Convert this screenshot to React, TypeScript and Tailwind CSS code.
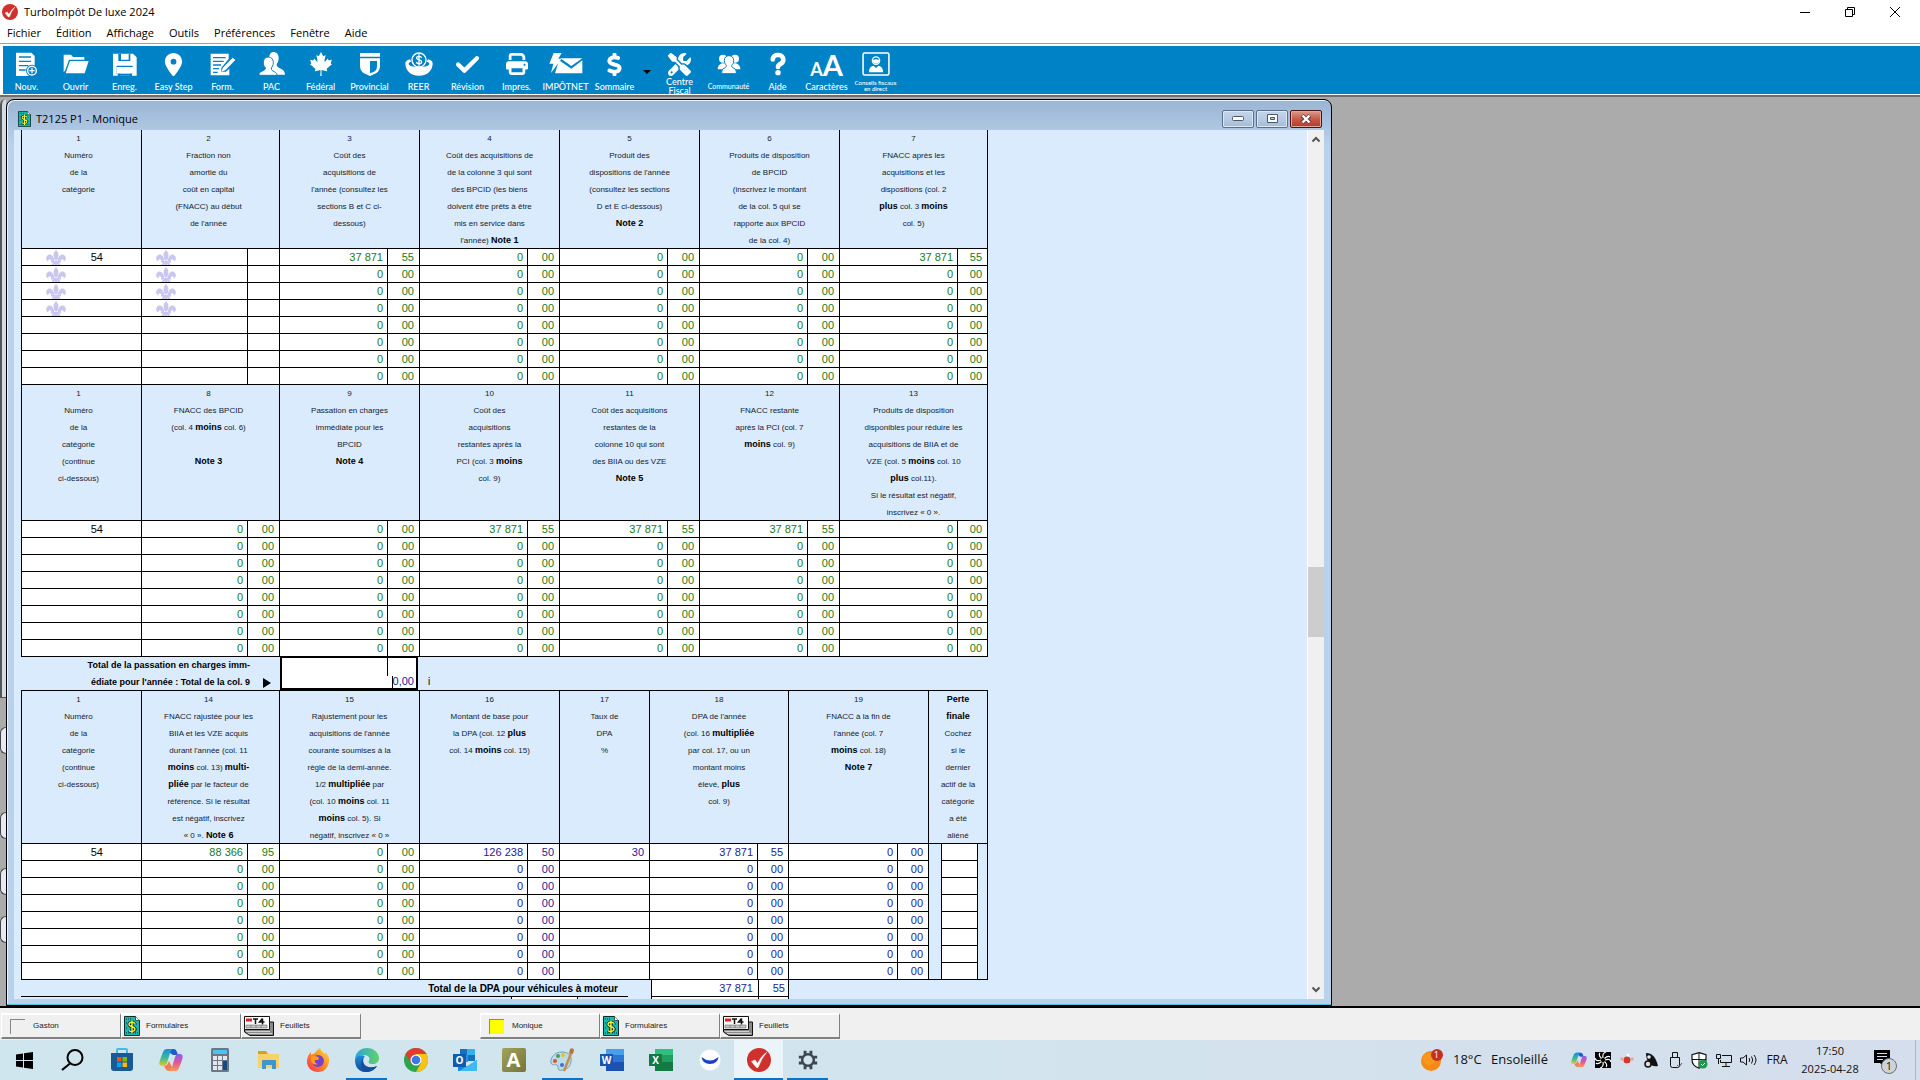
import type { ReactNode } from 'react'
import { FaCanadianMapleLeaf, FaCheck, FaDollarSign, FaLocationDot, FaPrint, FaQuestion, FaScrewdriverWrench } from 'react-icons/fa6'

/* ---------- Toolbar icons ---------- */

const NewIcon = () => (
  <svg width="22" height="24" viewBox="0 0 66 72" fill="#fff">
    <path d="M0 2h46l10 10v60H0z" />
    <path d="M9 15h36M9 28h36M9 41h28M9 54h20" stroke="#0082c6" strokeWidth="4" />
    <circle cx="48" cy="56" r="18" fill="#0082c6" />
    <circle cx="48" cy="56" r="13" fill="none" stroke="#fff" strokeWidth="4" />
    <path d="M48 48v16M40 56h16" stroke="#fff" strokeWidth="4" />
  </svg>
)

const OpenIcon = () => (
  <svg width="26" height="20" viewBox="0 0 78 60" fill="#fff">
    <path d="M2 2h22l6 7h34v8H18L6 50 2 54z" />
    <path d="M21 21h56L65 58H8z" />
  </svg>
)

const SaveIcon = () => (
  <svg width="24" height="23" viewBox="0 0 72 69">
    <path fill="#fff" d="M0 2h60l11 11v55H0z" />
    <path fill="#0082c6" d="M16 2h8v18h23V2h5v22H16zM10 42q0-4 4-4h42q4 0 4 4v20h-5v6H14v-6h-4z" />
    <path fill="#fff" d="M10 42h50v20H10z" />
    <path fill="#0082c6" d="M15 62h7v7h-7zM50 62h7v7h-7z" />
    <path fill="#fff" d="M36 4h8v12h-8z" />
  </svg>
)

const FormIcon = () => (
  <svg width="26" height="23" viewBox="0 0 78 69">
    <path fill="#fff" d="M2 2h54v16L34 44v12h14l10-9v20H2z" />
    <path d="M9 14h38M9 25h32M9 36h24M9 47h18M9 58h14" stroke="#0082c6" strokeWidth="4" />
    <path fill="#fff" d="M68 14l8 7-30 31-11 4 3-11z" />
  </svg>
)

const PacIcon = () => (
  <svg width="26" height="24" viewBox="0 0 78 72" fill="#fff">
    <path d="M43 0c10 0 16 7 16 18 0 9-3 14-6 18 0 9 5 11 14 15 8 4 10 9 11 17H42L30 34c-2-22 3-34 13-34z" />
    <path
      stroke="#0082c6"
      strokeWidth="3"
      d="M28 15c10 0 15 7 15 17 0 8-3 12-6 16 0 7 3 8 9 11 6 3 8 6 8 11H0c0-8 3-10 10-13 7-3 9-4 9-10-4-4-6-8-6-15 0-10 5-17 15-17z"
    />
  </svg>
)

const ProvincialIcon = () => (
  <svg width="20" height="23" viewBox="0 0 60 69">
    <path fill="#fff" d="M0 0h60v11H0zM0 16h60v22q0 16-12 23l-18 8-18-8Q0 54 0 38z" />
    <path fill="#0082c6" d="M30 24h21v15q0 12-9 17l-12 5z" />
  </svg>
)

const ReerIcon = () => (
  <svg width="28" height="24" viewBox="0 0 84 72">
    <path fill="#fff" d="M15 22C4 25 0 30 1 36c2 20 14 35 41 35s39-15 41-35c1-6-3-11-14-14l-4 7c6 2 8 3 8 6 0 6-12 10-31 10s-31-4-31-10c0-3 3-5 8-6z" />
    <circle cx="42" cy="24" r="21" fill="#0082c6" stroke="#fff" strokeWidth="4" />
    <path d="M50 17c-2-5-15-6-15 1 0 8 15 4 15 12 0 7-14 7-16 0M42 7v34" fill="none" stroke="#fff" strokeWidth="4" />
  </svg>
)

const NetIcon = () => (
  <svg width="34" height="22" viewBox="0 0 102 66" fill="#fff">
    <path d="M14 0h24L28 17h10L6 60l7-28H1z" />
    <path d="M34 16h66L67 39z" />
    <path d="M30 22l37 25 33-25v39H18z" />
  </svg>
)

const CommunityIcon = () => (
  <svg width="24" height="20" viewBox="0 0 72 60" fill="#fff">
    <circle cx="18" cy="14" r="12" />
    <circle cx="54" cy="14" r="12" />
    <path d="M2 46q0-14 14-18h40q14 4 14 18z" />
    <path stroke="#0082c6" strokeWidth="3" d="M36 5c9 0 14 6 14 15 0 7-3 11-6 14 0 6 3 7 7 9 5 2 7 6 7 16H14c0-10 2-14 7-16 4-2 7-3 7-9-3-3-6-7-6-14 0-9 5-15 14-15z" />
  </svg>
)

const FontsIcon = () => (
  <span className="flex items-baseline font-['Lato',sans-serif] font-bold leading-none text-white">
    <span className="text-[18px]">A</span>
    <span className="text-[29px]">A</span>
  </span>
)

const AdvisorIcon = () => (
  <svg width="28" height="24" viewBox="0 0 90 78">
    <rect x="3" y="3" width="84" height="72" rx="5" fill="none" stroke="#fff" strokeWidth="5" />
    <circle cx="45" cy="28" r="12" fill="none" stroke="#fff" strokeWidth="4" />
    <path fill="#fff" d="M34 26q11-5 22 0v4q-11 16-22 0zM22 66q0-18 15-21l8 7 8-7q15 3 15 21z" />
  </svg>
)

type Tool = { label: string; icon: ReactNode; small?: string }

const tools: Tool[] = [
  { label: 'Nouv.', icon: <NewIcon /> },
  { label: 'Ouvrir', icon: <OpenIcon /> },
  { label: 'Enreg.', icon: <SaveIcon /> },
  { label: 'Easy Step', icon: <FaLocationDot size={23} /> },
  { label: 'Form.', icon: <FormIcon /> },
  { label: 'PAC', icon: <PacIcon /> },
  { label: 'Fédéral', icon: <FaCanadianMapleLeaf size={24} /> },
  { label: 'Provincial', icon: <ProvincialIcon /> },
  { label: 'REER', icon: <ReerIcon /> },
  { label: 'Révision', icon: <FaCheck size={25} className="stroke-white stroke-[24]" /> },
  { label: 'Impres.', icon: <FaPrint size={22} /> },
  { label: 'IMPÔTNET', icon: <NetIcon /> },
  { label: 'Sommaire', icon: <FaDollarSign size={23} className="stroke-white stroke-[24]" /> },
]

const tools2: Tool[] = [
  { label: 'Centre Fiscal', icon: <FaScrewdriverWrench size={23} /> },
  { label: 'Communauté', icon: <CommunityIcon />, small: 'text-[7px] leading-[7px]' },
  { label: 'Aide', icon: <FaQuestion size={24} className="stroke-white stroke-[36]" /> },
  { label: 'Caractères', icon: <FontsIcon /> },
  { label: 'Conseils fiscaux en direct', icon: <AdvisorIcon />, small: 'text-[6px] leading-[6px]' },
]

function ToolButton({ label, icon, small }: Tool) {
  return (
    <button className="flex w-[49px] flex-col items-center text-white">
      <span className="flex h-7 items-center justify-center">{icon}</span>
      <span className={`flex h-4 items-center justify-center text-center ${small ?? 'text-[9px] leading-[9px]'}`}>
        {label}
      </span>
    </button>
  )
}

/* ---------- Small shared drawings ---------- */

const TurboLogo = ({ size }: { size: number }) => (
  <svg width={size} height={size} viewBox="0 0 24 24">
    <circle cx="12" cy="12" r="12" fill="#d0312d" />
    <path d="M4.500 13.500L8 12l2.500 3.500Q14 8 19.500 4.500 14 11 11 19.500H9.500z" fill="#fff" stroke="#fff" strokeWidth=".6" />
  </svg>
)

const FormsIcon = ({ className }: { className: string }) => (
  <svg className={className} viewBox="0 0 16 20">
    <path fill="#16b8b0" stroke="#0b2a2a" d="M.5.5h11l4 4v15H.5z" />
    <path fill="#fff" stroke="#0b2a2a" strokeWidth=".7" d="M11.5.5v4h4" />
    <path d="M2 3h6M2 17h3M11 17h3M2 7h2M12 8h2M2 12h2M12 13h2" stroke="#063c3c" strokeDasharray="1 1" />
    <path d="M11 7.500C9 5.500 5 6 5 8.500s6 2 6 4.500-4 3.500-6 1.500M8 4.500v13" fill="none" stroke="#0b2a2a" strokeWidth="3" />
    <path d="M11 7.500C9 5.500 5 6 5 8.500s6 2 6 4.500-4 3.500-6 1.500M8 4.500v13" fill="none" stroke="#f6f03a" strokeWidth="1.400" />
  </svg>
)

const SlipsIcon = () => (
  <svg width="30" height="20" viewBox="0 0 30 20">
    <path fill="#8a8a8a" stroke="#111" d="M4 6h25.500v13.500H6L.5 16V6z" />
    <path fill="#fff" stroke="#111" d="M.5.5h25v13H.5z" />
    <path fill="#e02020" d="M2 2.500h6v3H2z" />
    <path d="M9 3h5M11.500 3v5M18.500 2.500l-3 3.500h5M18.500 2.500v6" stroke="#111" strokeWidth="1.500" fill="none" />
    <path fill="#c4c4c4" stroke="#666" strokeWidth=".6" d="M2 9h21v3H2zM7 9v3M12 9v3M17 9v3" />
    <path d="M2 15.500h24M4 17.500h24" stroke="#eee" strokeWidth=".7" />
  </svg>
)

const Fleur = ({ className }: { className: string }) => (
  <svg className={`absolute top-px h-4 w-5 ${className}`} viewBox="0 0 40 32" fill="#c9c6f0" aria-hidden="true">
    <path d="M20 0q6 6 5 12-1 6-3 9h-4q-2-3-3-9-1-6 5-12z" />
    <path d="M16.500 23C16 12 9 7 4 10c-5 3-5 10 0 13 1-5 4-6 6-3 1 2 1 3 1 3zM23.500 23C24 12 31 7 36 10c5 3 5 10 0 13-1-5-4-6-6-3-1 2-1 3-1 3z" />
    <path d="M10 22h20v3H10zM17.500 25h5v7h-5zM14 25h4l-2 5h-5zM26 25h-4l2 5h5z" />
  </svg>
)

/* ---------- Form tables ---------- */

// Words between asterisks are set in bold
function rich(line: string) {
  return line.split('*').map((part, i) =>
    i % 2 ? (
      <b key={i} className="text-[9px] text-black">{part}</b>
    ) : (
      part
    )
  )
}

type Head = { span: number; pad?: string; lines: string[] }
type Kind = 'cat' | 'whole' | 'cents' | 'rate'
type Cell = { w: number; kind: Kind; first: string; rest: string; navy?: boolean }

const kindPad = { cat: 'pr-[38px] text-black', whole: 'pr-1', cents: 'pr-[5px]', rate: 'pr-[5px]' }

const amount = (w1: number, w2: number, first = '0', cents = '00', navy = false): Cell[] => [
  { w: w1, kind: 'whole', first, rest: '0', navy },
  { w: w2, kind: 'cents', first: cents, rest: '00', navy },
]

const category: Cell = { w: 120, kind: 'cat', first: '54', rest: '' }
const categoryLines = ['1', 'Numéro', 'de la', 'catégorie', '(continue', 'ci-dessous)']

type FormTableProps = { heads: Head[]; cells: Cell[]; fleurs?: boolean; finalLoss?: boolean; closed?: boolean }

function FormTable({ heads, cells, fleurs, finalLoss, closed }: FormTableProps) {
  const edge = 'border-l border-t border-black'
  return (
    <table className={`w-[967px] table-fixed border-separate border-spacing-0 border-r border-black ${closed ? 'border-b' : ''}`}>
      <colgroup>
        {cells.map((c, i) => <col key={i} style={{ width: c.w }} />)}
        {finalLoss && [13, 36, 10].map(w => <col key={w} style={{ width: w }} />)}
      </colgroup>
      <thead>
        <tr>
          {heads.map((h, i) => (
            <th key={i} colSpan={h.span} className={`${edge} ${h.pad ?? 'p-0'} align-top text-[8px] font-normal leading-[17px] text-[#17222e]`}>
              <div className="-mb-px whitespace-nowrap">
                {h.lines.map((l, j) => <div key={j} className="h-[17px]">{rich(l)}</div>)}
              </div>
            </th>
          ))}
        </tr>
      </thead>
      <tbody>
        {Array.from({ length: 8 }, (_, row) => (
          <tr key={row} className="h-[17px]">
            {cells.map((c, i) => (
              <td
                key={i}
                className={`${edge} relative h-[17px] bg-white py-0 pl-0 text-right text-[11px] leading-4 ${c.navy ? 'text-[#1a1a9c]' : 'text-[#177a1c]'} ${kindPad[c.kind]}`}
              >
                {fleurs && row < 4 && i === 0 && <Fleur className="left-6" />}
                {fleurs && row < 4 && i === 1 && <Fleur className="left-3.5" />}
                {row === 0 ? c.first : c.rest}
              </td>
            ))}
            {finalLoss && row === 0 && <td rowSpan={8} className={edge} />}
            {finalLoss && (
              <td className={`${edge} h-[17px] bg-white p-0`}>
                <input type="checkbox" aria-label="Perte finale" className="block h-4 w-full appearance-none" />
              </td>
            )}
            {finalLoss && row === 0 && <td rowSpan={8} className={edge} />}
          </tr>
        ))}
      </tbody>
    </table>
  )
}

const heads1: Head[] = [
  { span: 1, pad: 'py-0 pl-0 pr-1.5', lines: ['1', 'Numéro', 'de la', 'catégorie'] },
  { span: 2, pad: 'py-0 pl-0 pr-1', lines: ['2', 'Fraction non', 'amortie du', 'coût en capital', '(FNACC) au début', "de l'année"] },
  { span: 2, lines: ['3', 'Coût des', 'acquisitions de', "l'année (consultez les", 'sections B et C ci-', 'dessous)'] },
  { span: 2, lines: ['4', 'Coût des acquisitions de', 'de la colonne 3 qui sont', 'des BPCID (les biens', 'doivent être prêts à être', 'mis en service dans', "l'année) *Note 1*"] },
  { span: 2, lines: ['5', 'Produit des', "dispositions de l'année", '(consultez les sections', 'D et E ci-dessous)', '*Note 2*'] },
  { span: 2, lines: ['6', 'Produits de disposition', 'de BPCID', '(inscrivez le montant', 'de la col. 5 qui se', 'rapporte aux BPCID', 'de la col. 4)'] },
  { span: 2, lines: ['7', 'FNACC après les', 'acquisitions et les', 'dispositions (col. 2', '*plus* col. 3 *moins*', 'col. 5)'] },
]

const heads2: Head[] = [
  { span: 1, pad: 'py-0 pl-0 pr-1.5', lines: categoryLines },
  { span: 2, pad: 'py-0 pl-0 pr-1', lines: ['8', 'FNACC des BPCID', '(col. 4 *moins* col. 6)', '', '*Note 3*'] },
  { span: 2, lines: ['9', 'Passation en charges', 'immédiate pour les', 'BPCID', '*Note 4*'] },
  { span: 2, lines: ['10', 'Coût des', 'acquisitions', 'restantes après la', 'PCI (col. 3 *moins*', 'col. 9)'] },
  { span: 2, lines: ['11', 'Coût des acquisitions', 'restantes de la', 'colonne 10 qui sont', 'des BIIA ou des VZE', '*Note 5*'] },
  { span: 2, lines: ['12', 'FNACC restante', 'après la PCI (col. 7', '*moins* col. 9)'] },
  { span: 2, lines: ['13', 'Produits de disposition', 'disponibles pour réduire les', 'acquisitions de BIIA et de', 'VZE (col. 5 *moins* col. 10', '*plus* col.11).', 'Si le résultat est négatif,', 'inscrivez « 0 ».'] },
]

const heads3: Head[] = [
  { span: 1, pad: 'py-0 pl-0 pr-1.5', lines: categoryLines },
  { span: 2, pad: 'py-0 pl-0 pr-1', lines: ['14', 'FNACC rajustée pour les', 'BIIA et les VZE acquis', "durant l'année (col. 11", '*moins* col. 13) *multi-*', '*pliée* par le facteur de', 'référence. Si le résultat', 'est négatif, inscrivez', '« 0 ». *Note 6*'] },
  { span: 2, lines: ['15', 'Rajustement pour les', "acquisitions de l'année", 'courante soumises à la', 'règle de la demi-année.', '1/2 *multipliée* par', '(col. 10 *moins* col. 11', '*moins* col. 5). Si', 'négatif, inscrivez « 0 »'] },
  { span: 2, lines: ['16', 'Montant de base pour', 'la DPA (col. 12 *plus*', 'col. 14 *moins* col. 15)'] },
  { span: 1, lines: ['17', 'Taux de', 'DPA', '%'] },
  { span: 2, lines: ['18', "DPA de l'année", '(col. 16 *multipliée*', 'par col. 17, ou un', 'montant moins', 'élevé, *plus*', 'col. 9)'] },
  { span: 2, lines: ['19', 'FNACC à la fin de', "l'année (col. 7", '*moins* col. 18)', '*Note 7*'] },
  { span: 3, lines: ['*Perte*', '*finale*', 'Cochez', 'si le', 'dernier', 'actif de la', 'catégorie', 'a été', 'aliéné'] },
]

const blank: Cell[] = [
  { w: 106, kind: 'whole', first: '', rest: '' },
  { w: 32, kind: 'cents', first: '', rest: '' },
]

const cells1 = [category, ...blank, ...amount(108, 32, '37 871', '55'), ...amount(108, 32), ...amount(108, 32), ...amount(108, 32), ...amount(118, 30, '37 871', '55')]

const cells2 = [
  category,
  ...amount(106, 32),
  ...amount(108, 32),
  ...amount(108, 32, '37 871', '55'),
  ...amount(108, 32, '37 871', '55'),
  ...amount(108, 32, '37 871', '55'),
  ...amount(118, 30),
]

const cells3: Cell[] = [
  category,
  ...amount(106, 32, '88 366', '95'),
  ...amount(108, 32),
  ...amount(108, 32, '126 238', '50', true),
  { w: 90, kind: 'rate', first: '30', rest: '', navy: true },
  ...amount(108, 31, '37 871', '55', true),
  ...amount(109, 31, '0', '00', true),
]

function TaxForm() {
  return (
    <div className="-mt-px pl-[7px] font-['Liberation_Sans',Arial,sans-serif]">
      <FormTable heads={heads1} cells={cells1} fleurs />
      <FormTable heads={heads2} cells={cells2} closed />
      <div className="-mt-px flex h-[34px]">
        <label htmlFor="total9" className="w-[229px] pt-px text-right text-[9px] font-bold leading-[17px]">
          Total de la passation en charges imm-<br />édiate pour l'année : Total de la col. 9
        </label>
        <span className="flex w-[30px] items-end justify-center pb-0.5 pl-1">
          <svg width="8" height="10" viewBox="0 0 8 10"><path d="M0 0l8 5-8 5z" /></svg>
        </span>
        <div className="relative w-[138px] border-2 border-black bg-white">
          <span className="absolute right-7 top-0 h-[18px] w-px bg-black" />
          <span className="absolute bottom-0 right-[23px] h-3 w-px bg-black" />
          <input id="total9" defaultValue="0,00" className="h-full w-full bg-transparent pr-0.5 pt-4 text-right text-[11px] leading-4 text-[#1a1a9c] outline-none" />
        </div>
        <span className="self-end pl-2.5 text-[10px] leading-4">i</span>
      </div>
      <FormTable heads={heads3} cells={cells3} finalLoss closed />
      <div className="flex h-[17px] text-[11px] leading-4 text-[#1a1a9c]">
        <div className="w-[607px] border-b border-black pr-2.5 text-right text-[10px] font-bold leading-[17px] text-black">Total de la DPA pour véhicules à moteur</div>
        <div className="ml-[23px] w-[107px] border-b border-l border-black bg-white pr-[5px] text-right">37 871</div>
        <div className="w-[31px] border-x border-b border-black bg-white pr-[3px] text-right">55</div>
      </div>
      <div className="flex h-4">
        <div className="ml-[490px] w-[67px] border-x border-black bg-white" />
        <div className="ml-[73px] w-[107px] border-l border-black bg-white" />
        <div className="w-[31px] border-x border-black bg-white" />
      </div>
    </div>
  )
}

/* ---------- Child window ---------- */

const frameBtn = 'flex h-[18px] w-8 items-center justify-center rounded-xs border border-[#5a6f8c] bg-linear-to-b from-[#c3d5ea] via-[#b7cbe3] via-50% to-[#a3bad6] shadow-[inset_0_0_0_1px_#dce8f6]'

function ChildWindow() {
  return (
    <section className="flex min-w-0 max-w-[1326px] flex-1 flex-col rounded-t-lg border border-black bg-linear-to-b from-[#9ab4d3] via-[#b9d1ea] via-5% to-[#b9d1ea] shadow-[inset_1px_1px_0_#eaf3fc]">
      <header className="flex h-[30px] items-center gap-[5px] pl-[11px] pr-[9px] pt-[7px]">
        <FormsIcon className="h-4 w-[13px]" />
        <h2 className="flex-1 text-[11px] leading-4">T2125 P1 - Monique</h2>
        <div className="flex gap-0.5">
          <button aria-label="Réduire" className={frameBtn}>
            <svg width="12" height="6" viewBox="0 0 12 6"><rect x=".5" y=".5" width="11" height="4" rx="1" fill="#fff" stroke="#4d5868" /></svg>
          </button>
          <button aria-label="Restaurer" className={frameBtn}>
            <svg width="11" height="10" viewBox="0 0 11 10"><path d="M.5.5h10v8H.5z" fill="#fff" stroke="#4d5868" /><path d="M3.500 3.500h4v2h-4z" fill="#b4c8e0" stroke="#4d5868" /></svg>
          </button>
          <button aria-label="Fermer" className="flex h-[18px] w-8 items-center justify-center rounded-xs border border-[#4b1414] bg-linear-to-b from-[#dd9a8c] via-[#c9594a] via-50% to-[#b23a28] shadow-[inset_0_0_0_1px_#e0a89c]">
            <svg width="12" height="10" viewBox="0 0 12 10"><path d="M2 1.500l8 7M10 1.500l-8 7" stroke="#5b3a40" strokeWidth="4" /><path d="M2.500 1.500l7 7M9.500 1.500l-7 7" stroke="#fff" strokeWidth="2.400" /></svg>
          </button>
        </div>
      </header>
      <div className="flex min-h-0 flex-1 px-[7px]">
        <div className="min-w-0 flex-1 overflow-hidden bg-[#d9ebfd]">
          <TaxForm />
        </div>
        <div className="flex w-[17px] flex-col items-center border-l border-white bg-[#f0f0f0]">
          <svg className="mt-1.5 shrink-0" width="8" height="7" viewBox="0 0 8 7"><path d="M.5 5.500L4 2l3.500 3.500" fill="none" stroke="#555" strokeWidth="2" /></svg>
          <span className="grow-[424]" />
          <span className="h-[70px] w-full shrink-0 bg-[#cdcdcd]" />
          <span className="grow-[349]" />
          <svg className="mb-1.5 shrink-0" width="8" height="7" viewBox="0 0 8 7"><path d="M.5 1.500L4 5l3.500-3.500" fill="none" stroke="#555" strokeWidth="2" /></svg>
        </div>
      </div>
      <div className="h-[6px] shrink-0 border-b border-[#4fc3dc]" />
    </section>
  )
}

/* ---------- Bottom bars ---------- */

function StatusButton({ label, children }: { label: string; children: ReactNode }) {
  return (
    <button className="flex h-[26px] w-[120px] items-center gap-1.5 border-b-2 border-l border-r border-t-2 border-b-[#808080] border-l-white border-r-[#808080] border-t-white pl-[2px] text-[8px] text-[#222]">
      {children}
      {label}
    </button>
  )
}

const Person = ({ color }: { color: string }) => (
  <span className={`ml-1.5 mr-0.5 size-[15px] border-l border-t border-[#888] ${color}`} />
)

const StoreIcon = () => (
  <svg width="24" height="24" viewBox="0 0 24 24">
    <path d="M7 6V2q0-1 1-1h8q1 0 1 1v4" fill="none" stroke="#45b8e8" strokeWidth="2" />
    <path fill="#175a96" d="M1 5h22v15q0 3-3 3H4q-3 0-3-3z" />
    <path fill="#f25022" d="M7 9h4.500v4.500H7z" /><path fill="#7fba00" d="M12.500 9H17v4.500h-4.500z" />
    <path fill="#00a4ef" d="M7 14.500h4.500V19H7z" /><path fill="#ffb900" d="M12.500 14.500H17V19h-4.500z" />
  </svg>
)

const CopilotIcon = ({ size }: { size: number }) => (
  <svg width={size} height={size} viewBox="0 0 24 24">
    <defs>
      <linearGradient id="copA" x1="0" y1="0" x2="0" y2="1"><stop offset="0" stopColor="#1b8fe0" /><stop offset=".5" stopColor="#36b89a" /><stop offset="1" stopColor="#e8c830" /></linearGradient>
      <linearGradient id="copB" x1="0" y1="0" x2="0" y2="1"><stop offset="0" stopColor="#8b5cf0" /><stop offset=".5" stopColor="#e0569a" /><stop offset="1" stopColor="#ff9a50" /></linearGradient>
    </defs>
    <path fill="#1a5fc8" d="M7 1h8q2 0 3 3l1 3h-5L11 5z" />
    <path fill="url(#copA)" d="M8 1h6q-2 1-3 4L8 15q-1 3-3 3H3q-4 0-2-6L4 4q1-3 4-3z" />
    <path fill="url(#copB)" d="M16 23h-6q2-1 3-4l3-10q1-3 3-3h2q4 0 2 6l-3 8q-1 3-4 3z" />
    <path fill="#f08050" d="M5 18q3 0 4-3l1-2 3 6q-1 3-3 4Q7 23 5 18z" />
  </svg>
)

const CalcIcon = () => (
  <svg width="18" height="24" viewBox="0 0 18 24">
    <rect width="18" height="24" rx="1.500" fill="#6b7785" />
    <path fill="#4cc3ee" d="M2 2h14v4H2z" />
    <path fill="#e3e8ec" d="M2 8h4v4H2zM7 8h4v4H7zM12 8h4v4h-4zM2 13h4v4H2zM7 13h4v4H7zM2 18h4v4H2zM7 18h4v4H7z" />
    <path fill="#184a80" d="M12 13h4v9h-4z" />
  </svg>
)

const ExplorerIcon = () => (
  <svg width="22" height="20" viewBox="0 0 22 20">
    <path fill="#d99e28" d="M0 1h8l2 3h-2v3H0z" /><path fill="#f7d169" d="M0 4h21v14H0z" />
    <path fill="#3f95cc" d="M4 19v-8q0-1 1-1h12q1 0 1 1v8h-4v-4H8v4z" />
  </svg>
)

const FirefoxIcon = () => (
  <svg width="24" height="24" viewBox="0 0 24 24">
    <defs><linearGradient id="ff" x1="1" y1="0" x2="0" y2="1"><stop offset="0" stopColor="#ffe14a" /><stop offset=".5" stopColor="#ff8a1e" /><stop offset="1" stopColor="#f0285a" /></linearGradient></defs>
    <path fill="url(#ff)" d="M14 0c1 3 3 4 5 6 1-1 0-2 0-2 3 3 5 6 4 10-1 6-5 10-11 10S1 20 1 13c0-4 2-7 4-9v3l4-2c1-2 3-4 5-5z" />
    <circle cx="12" cy="13" r="6" fill="#7b3fd0" />
    <path fill="#ff9a20" d="M5 9q4-2 7 0 2 1 0 3H9q-1 3 3 4-5 2-7-3z" />
  </svg>
)

const EdgeIcon = () => (
  <svg width="24" height="24" viewBox="0 0 24 24">
    <defs>
      <linearGradient id="edA" x1="0" y1="0" x2="1" y2="0"><stop offset="0" stopColor="#2aa5dc" /><stop offset="1" stopColor="#62d26a" /></linearGradient>
      <linearGradient id="edB" x1="0" y1="0" x2="0" y2="1"><stop offset="0" stopColor="#1b8fd8" /><stop offset="1" stopColor="#134a9c" /></linearGradient>
    </defs>
    <path fill="url(#edA)" d="M0 12C0 4 6 0 12 0c7 0 12 5 12 10 0 4-3 6-6 6-4 0-5-1-4-3 2-4-2-6-5-6-5 0-8 3-9 5z" />
    <path fill="url(#edB)" d="M0 12c1-4 6-6 10-4-3 3-3 7 0 10 3 2 8 3 12 0-4 8-22 10-22-6z" />
    <path fill="#124f9e" d="M9 9c-3 6 2 13 13 9-2 3-6 6-10 6C6 23 4 14 9 9z" />
  </svg>
)

const ChromeIcon = () => (
  <svg width="24" height="24" viewBox="0 0 24 24">
    <circle cx="12" cy="12" r="12" fill="#2da44e" />
    <path fill="#e33b2e" d="M1.600 6A12 12 0 0122.400 6H12L7 15z" />
    <path fill="#fbc116" d="M22.400 6A12 12 0 0112 24l5-9-5-9z" />
    <circle cx="12" cy="12" r="5.500" fill="#fff" /><circle cx="12" cy="12" r="4.300" fill="#3b78e7" />
  </svg>
)

type OfficeProps = { letter: string; dark: string; mid: string; light: string }

const OfficeIcon = ({ letter, dark, mid, light }: OfficeProps) => (
  <svg width="24" height="22" viewBox="0 0 24 22">
    <path fill={light} d="M6 0h18v6H6z" /><path fill={mid} d="M6 6h18v8H6z" /><path fill={dark} d="M6 13h18v9H6z" />
    <path fill={dark} d="M0 5h13v12H0z" />
    <text x="6.500" y="14.500" textAnchor="middle" fontSize="10" fontWeight="700" fill="#fff" fontFamily="Open Sans, sans-serif">{letter}</text>
  </svg>
)

const OutlookIcon = () => (
  <svg width="24" height="23" viewBox="0 0 24 23">
    <path fill="#1470c0" d="M7 0h15v12H7z" /><path fill="#35b0ee" d="M14 0h8v6h-8z" /><path fill="#2a93dc" d="M7 6h8v7H7z" />
    <path fill="#1b86d8" d="M5 12l10 6 9-7v11H5z" /><path fill="#3fb8f4" d="M24 11v11H6z" />
    <path fill="#0f5cad" d="M0 5h13v13H0z" />
    <text x="6.500" y="15" textAnchor="middle" fontSize="10" fontWeight="700" fill="#fff" fontFamily="Open Sans, sans-serif">O</text>
  </svg>
)

const AntidoteIcon = () => (
  <span className="flex size-6 items-center justify-center rounded-xs bg-linear-to-br from-[#a3a35a] to-[#75753a] text-[20px] font-bold leading-6 text-white">
    A
  </span>
)

const PaintIcon = () => (
  <svg width="25" height="24" viewBox="0 0 25 24">
    <path fill="#b8dcec" stroke="#7c9fae" d="M12 4c7 0 10 4 9 10-1 7-8 9-12 8-2-1 0-4-2-5s-5 1-6-2C0 9 5 4 12 4z" />
    <circle cx="5" cy="13" r="2" fill="#e05030" /><circle cx="8" cy="8" r="2" fill="#4aa04a" /><circle cx="13" cy="7" r="2" fill="#e8c030" /><circle cx="12" cy="17" r="2" fill="#4070d0" />
    <path d="M22 3L14 23" stroke="#c88c4a" strokeWidth="2.500" /><path d="M20 1q3-2 4 1l-1 4-4-1z" fill="#b07840" />
  </svg>
)

const GearIcon = () => (
  <svg width="20" height="20" viewBox="0 0 24 24" stroke="#3c4650" fill="none">
    <circle cx="12" cy="12" r="7" strokeWidth="3" />
    <path strokeWidth="3.500" d="M8.500 1v4M15.500 1v4M8.500 19v4M15.500 19v4M1 8.500h4M1 15.500h4M19 8.500h4M19 15.500h4" />
  </svg>
)

const apps: { name: string; icon: ReactNode; open?: boolean; active?: boolean }[] = [
  { name: 'Rechercher', icon: <svg width="23" height="22" viewBox="0 0 23 22"><circle cx="14" cy="8.500" r="7.500" fill="none" stroke="#000" strokeWidth="2" /><path d="M9 14.500L1 21" stroke="#000" strokeWidth="2.200" /></svg> },
  { name: 'Store', icon: <StoreIcon /> },
  { name: 'Copilot', icon: <CopilotIcon size={24} /> },
  { name: 'Calculatrice', icon: <CalcIcon /> },
  { name: 'Explorateur', icon: <ExplorerIcon /> },
  { name: 'Firefox', icon: <FirefoxIcon /> },
  { name: 'Edge', icon: <EdgeIcon />, open: true },
  { name: 'Chrome', icon: <ChromeIcon /> },
  { name: 'Outlook', icon: <OutlookIcon /> },
  { name: 'Antidote', icon: <AntidoteIcon /> },
  { name: 'Paint', icon: <PaintIcon />, open: true },
  { name: 'Word', icon: <OfficeIcon letter="W" dark="#1a53b0" mid="#2b75d4" light="#45a0ee" /> },
  { name: 'Excel', icon: <OfficeIcon letter="X" dark="#127a43" mid="#1f9f62" light="#2fc07e" /> },
  { name: 'Assistant', icon: <svg width="22" height="22" viewBox="0 0 22 22"><circle cx="11" cy="11" r="10.500" fill="#fff" /><path d="M2.500 8q8.500 7 17 0-1 7-8.500 7T2.500 8z" fill="#1a3fd0" /></svg> },
  { name: 'TurboImpôt', icon: <TurboLogo size={24} />, open: true, active: true },
  { name: 'Paramètres', icon: <GearIcon />, open: true },
]

function Taskbar() {
  return (
    <footer className="flex h-10 bg-linear-to-r from-[#cfe6ee] via-[#d2e4ee] to-[#d5deec]">
      <button aria-label="Démarrer" className="flex w-12 items-center justify-center">
        <svg width="17" height="17" viewBox="0 0 17 17"><path d="M0 2.500L7 1.500V8H0zM8 1.300L17 0v8H8zM0 9h7v6.500l-7-1zM8 9h9v8l-9-1.300z" /></svg>
      </button>
      {apps.map(a => (
        <button key={a.name} aria-label={a.name} className={`relative flex w-[49px] items-center justify-center ${a.active ? 'bg-[#ebf4f8]' : ''}`}>
          {a.icon}
          {a.open && <span className={`absolute bottom-0 h-0.5 bg-[#0f72c4] ${a.active ? 'inset-x-0' : 'inset-x-1'}`} />}
        </button>
      ))}
      <div className="ml-auto flex items-center text-[13px] text-[#111]">
        <button className="relative mr-2.5 size-[22px]" aria-label="Météo">
          <svg width="22" height="22" viewBox="0 0 22 22"><circle cx="10" cy="12" r="10" fill="#f58a14" /><circle cx="8" cy="10" r="6" fill="#f9a020" opacity=".6" /><circle cx="16" cy="6" r="6" fill="#c5301e" /></svg>
          <span className="absolute right-1 top-0 text-[9px] leading-3 text-white">1</span>
        </button>
        <span className="w-[38px]">18°C</span>
        <span className="mr-5 w-[60px]">Ensoleillé</span>
        <div className="flex items-center gap-2">
          <CopilotIcon size={16} />
          <svg width="16" height="16" viewBox="0 0 16 16"><path d="M0 0h16v16H0z" /><path d="M8 6q-1-5 3-6M10 8q5-2 6 2M8 10q1 5-3 6M6 8q-5 2-6-2M9.500 6.500Q13 3 15 5M9.500 9.500Q13 13 11 15M6.500 9.500Q3 13 1 11M6.500 6.500Q3 3 5 1" fill="none" stroke="#fff" strokeWidth="1.200" /></svg>
          <svg width="16" height="16" viewBox="0 0 16 16"><circle cx="8" cy="8" r="3.500" fill="#d03a2a" /><circle cx="3" cy="7" r="1.800" fill="#e8a8a0" /><circle cx="13" cy="7" r="1.800" fill="#e8a8a0" /><circle cx="9" cy="12.500" r="1.500" fill="#d8d8d8" /><circle cx="9" cy="3" r="1.500" fill="#fff" /></svg>
          <svg width="16" height="16" viewBox="0 0 16 16"><path fill="#111" d="M3 1q9 0 12 13-6 1-9-3T3 1z" /><circle cx="5" cy="12" r="3" fill="#ddd" stroke="#111" strokeWidth="1.500" /><circle cx="6" cy="5" r="1.800" fill="#eee" /></svg>
          <svg width="16" height="16" viewBox="0 0 16 16" fill="none" stroke="#111"><path d="M5.500 5V.5h5V5M3.500 5.500h9v8q0 2-2 2h-5q-2 0-2-2z" /><path d="M10 13l2 2 3-4" stroke="#555" /></svg>
          <svg width="17" height="17" viewBox="0 0 17 17"><path d="M8 .7l7 2v5q0 6-7 8.500-7-2.500-7-8.500v-5z" fill="#fff" stroke="#111" strokeWidth="1.200" /><path d="M8 1v15M1 7.500h14" stroke="#111" /><circle cx="12" cy="12" r="4.500" fill="#1f9a4a" /><path d="M10 12l1.500 1.500L14 11" stroke="#fff" fill="none" /></svg>
          <svg width="16" height="16" viewBox="0 0 16 16" fill="none" stroke="#111"><path d="M6 3.500h9.500v7H4.500V8M10 11v3.500M6 14.500h8M.5 2.500h4v4h-4zM2.500 7v5" /></svg>
          <svg width="17" height="16" viewBox="0 0 17 16" fill="none" stroke="#111"><path d="M.5 6h2.500l3.500-3v10L3 10H.5zM9 6q1.500 2 0 4M11.500 4.500q2.500 3.500 0 7M14 3q4 5 0 10" /></svg>
        </div>
        <span className="w-10 text-center text-[12px]">FRA</span>
        <time className="w-[66px] text-center text-[11px] leading-[18px]">17:50<br />2025-04-28</time>
        <button aria-label="Notifications" className="relative ml-1.5 mr-[18px] size-7">
          <svg width="28" height="28" viewBox="0 0 28 28"><path d="M5 4h16v13h-6v4l-4-4H5z" /><path d="M8 7.500h10M8 10.500h10M8 13.500h6" stroke="#d5deec" /><circle cx="20" cy="20" r="7.500" fill="#cfd3d8" stroke="#6a6e74" /></svg>
          <span className="absolute bottom-0 right-0 size-4 text-center text-[11px] leading-4">1</span>
        </button>
        <span className="mr-1 h-10 w-px bg-[#aeb8c4]" />
      </div>
    </footer>
  )
}

const strip = 'h-[27px] rounded-l-md border-y border-l border-[#444] bg-[#e4e9f4]'

export default function App() {
  return (
    <div className="flex h-screen flex-col overflow-hidden bg-white font-['Open_Sans','Noto_Sans',sans-serif] text-black">
      <header className="flex h-6 shrink-0 items-center gap-1.5 pl-0.5">
        <TurboLogo size={16} />
        <h1 className="flex-1 text-[11px]">TurboImpôt De luxe 2024</h1>
        <div className="flex pr-[3px]">
          <button aria-label="Réduire" className="flex h-5 w-[45px] items-center justify-center"><svg width="10" height="10" viewBox="0 0 10 10"><path d="M0 5.500h10" stroke="#000" /></svg></button>
          <button aria-label="Restaurer" className="flex h-5 w-[45px] items-center justify-center"><svg width="10" height="10" viewBox="0 0 10 10" fill="none" stroke="#000"><path d="M.5 2.500h7v7h-7zM2.500 2.500v-2h7v7h-2" /></svg></button>
          <button aria-label="Fermer" className="flex h-5 w-[45px] items-center justify-center"><svg width="10" height="10" viewBox="0 0 10 10"><path d="M0 0l10 10M10 0L0 10" stroke="#000" /></svg></button>
        </div>
      </header>
      <nav className="flex h-[19px] shrink-0 items-center gap-[15px] pl-[7px] text-[11px]">
        {['Fichier', 'Édition', 'Affichage', 'Outils', 'Préférences', 'Fenêtre', 'Aide'].map(m => (
          <button key={m}>{m}</button>
        ))}
      </nav>

      {/* Toolbar */}
      <div className="shrink-0 border-t border-[#a0a0a0] pb-px pl-[3px] pt-0.5">
        <div className="flex h-12 bg-[#0082c6] pt-1 font-['Lato',sans-serif] font-medium">
          <div className="-ml-px flex">
            {tools.map(t => <ToolButton key={t.label} {...t} />)}
            <button aria-label="Autres sommaires" className="flex w-4 items-center justify-center">
              <svg width="8" height="4" viewBox="0 0 8 4"><path d="M0 0h8L4 4z" /></svg>
            </button>
            {tools2.map(t => <ToolButton key={t.label} {...t} />)}
          </div>
        </div>
      </div>

      {/* Document area */}
      <main className="flex min-h-0 flex-1 border-b-2 border-t-2 border-b-black border-t-[#6e6e6e] bg-[#ababab] pt-0.5">
        <div className="w-1.5 shrink-0">
          <div className="h-[599px] rounded-tl-md border-b border-l-2 border-[#555] bg-[#d4dae4]" />
          <div className={`mt-[29px] ${strip}`} />
          <div className={`mt-[58px] ${strip}`} />
          <div className={`mt-[29px] ${strip}`} />
          <div className={`mt-[21px] ${strip}`} />
        </div>
        <ChildWindow />
      </main>

      <div className="flex h-8 shrink-0 items-end bg-[#f0f0f0] pb-px pl-px font-['Liberation_Sans',Arial,sans-serif]">
        <StatusButton label="Gaston"><Person color="bg-[#f0f0f0]" /></StatusButton>
        <StatusButton label="Formulaires"><FormsIcon className="h-5 w-4" /></StatusButton>
        <StatusButton label="Feuillets"><SlipsIcon /></StatusButton>
        <span className="w-[119px]" />
        <StatusButton label="Monique"><Person color="bg-[#ffff00]" /></StatusButton>
        <StatusButton label="Formulaires"><FormsIcon className="h-5 w-4" /></StatusButton>
        <StatusButton label="Feuillets"><SlipsIcon /></StatusButton>
      </div>
      <Taskbar />
    </div>
  )
}
